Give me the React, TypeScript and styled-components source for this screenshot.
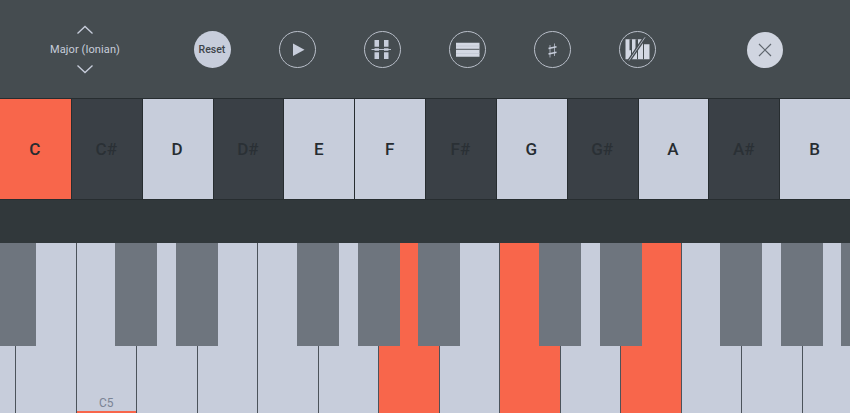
import * as React from 'react';
import styled, { createGlobalStyle } from 'styled-components';

const NOTES = ['C', 'C#', 'D', 'D#', 'E', 'F', 'F#', 'G', 'G#', 'A', 'A#', 'B'];
const ACTIVE_NOTE = 'C';

// first white key starts off screen
const WHITE_KEY_COUNT = 15;
const ACTIVE_WHITE = [7, 9, 11];
const LABEL_WHITE = 2;
const BLACK_KEYS = [-6, 115, 176, 297, 357.5, 418, 539, 599.5, 720, 780.5, 841];

const App: React.FC = () => {
  return (
    <StyledPage>
      <GlobalStyle />
      <StyledToolbar>
        <StyledScalePicker>
          <svg width='18' height='10' viewBox='0 0 18 10' fill='none'>
            <path d='M1.5 8.5L9 1.5L16.5 8.5' stroke='#c7cddb' strokeWidth='1.3' />
          </svg>
          <StyledScaleName>Major (Ionian)</StyledScaleName>
          <svg width='18' height='10' viewBox='0 0 18 10' fill='none'>
            <path d='M1.5 1.5L9 8.5L16.5 1.5' stroke='#c7cddb' strokeWidth='1.3' />
          </svg>
        </StyledScalePicker>
        <StyledButtons>
          <StyledFilledButton>Reset</StyledFilledButton>
          <StyledRoundButton>
            <svg width='37' height='37' viewBox='0 0 37 37'>
              <path d='M14 12.5L25.5 18.8L14 25Z' fill='#c7cddb' />
            </svg>
          </StyledRoundButton>
          <StyledRoundButton>
            <svg width='37' height='37' viewBox='0 0 37 37'>
              <path d='M10.5 9h4.5v19h-4.5zM20 9h4.5v19H20z' fill='#c7cddb' />
              <path d='M7 16.5h20M7 20.5h20' stroke='#454c50' strokeWidth='1.4' />
              <path d='M7.5 18.5h19.5' stroke='#c7cddb' strokeWidth='.9' />
            </svg>
          </StyledRoundButton>
          <StyledRoundButton>
            <svg width='37' height='37' viewBox='0 0 37 37'>
              <path d='M7 11.7h23.5v14H7z' fill='#d3d8e3' />
              <path d='M7 18.3h23.5' stroke='#454c50' strokeWidth='.9' />
              <path d='M7 15h23.5M7 22.5h23.5' stroke='#bcc2cf' strokeWidth='.6' />
            </svg>
          </StyledRoundButton>
          <StyledRoundButton>
            <svg width='37' height='37' viewBox='0 0 37 37' fill='none'>
              <path d='M16 14v12.5M20.5 12.5V25' stroke='#aab0bd' strokeWidth='.9' />
              <path d='M14.5 17.5l8-1.8M14.5 23l8-1.8' stroke='#c7cddb' strokeWidth='1.6' />
            </svg>
          </StyledRoundButton>
          <StyledRoundButton>
            <svg width='37' height='37' viewBox='0 0 37 37' fill='none'>
              <path d='M6.5 8.3h17.5v5h6.5v15h-24z' fill='#d3d8e3' />
              <path d='M12.5 8.3v20M18.5 8.3v20M24.5 8.3v20' stroke='#454c50' strokeWidth='1' />
              <path d='M10.5 8.3h2v11h-2zM16.5 8.3h2v11h-2z' fill='#454c50' />
              <path d='M26 6.3L10 29.6' stroke='#454c50' strokeWidth='3.4' />
              <path d='M26 6.3L10 29.6' stroke='#aab0bd' strokeWidth='1' />
            </svg>
          </StyledRoundButton>
        </StyledButtons>
        <StyledCloseButton>
          <svg width='14' height='14' viewBox='0 0 14 14' fill='none'>
            <path d='M1 1L13 13M13 1L1 13' stroke='#5f666e' strokeWidth='1.2' />
          </svg>
        </StyledCloseButton>
      </StyledToolbar>

      <StyledNotes>
        {NOTES.map((note) => (
          <StyledNote
            key={note}
            $sharp={note.includes('#')}
            $active={note === ACTIVE_NOTE}
          >
            {note}
          </StyledNote>
        ))}
      </StyledNotes>

      <StyledSpacer />

      <StyledKeyboard>
        <StyledWhiteKeys>
          {Array.from({ length: WHITE_KEY_COUNT }, (_, i) => (
            <StyledWhiteKey key={i} $active={ACTIVE_WHITE.includes(i)}>
              {i === LABEL_WHITE && <StyledKeyLabel>C5</StyledKeyLabel>}
            </StyledWhiteKey>
          ))}
        </StyledWhiteKeys>
        {BLACK_KEYS.map((left) => (
          <StyledBlackKey key={left} $left={left} />
        ))}
      </StyledKeyboard>
    </StyledPage>
  );
};

export default App;

const GlobalStyle = createGlobalStyle`
  html, body {
    margin: 0;
    padding: 0;
    background: #454c50;
  }
  * {
    box-sizing: border-box;
  }
`;
const StyledPage = styled.div`
  display: flex;
  flex-direction: column;
  width: 850px;
  height: 413px;
  overflow: hidden;
  font-family: Roboto, 'Liberation Sans', sans-serif;
`;
const StyledToolbar = styled.div`
  display: flex;
  flex-direction: row;
  align-items: center;
  height: 98px;
  flex: none;
  padding-top: 1px;
  background: #454c50;
`;
const StyledScalePicker = styled.div`
  display: flex;
  flex-direction: column;
  align-items: center;
  gap: 8px;
  width: 170px;
  flex: none;

  svg {
    display: block;
  }
`;
const StyledScaleName = styled.div`
  font-size: 11px;
  line-height: 13px;
  letter-spacing: 0.1px;
  color: #c7cddb;
`;
const StyledButtons = styled.div`
  display: flex;
  flex-direction: row;
  gap: 48px;
  margin-left: 23.5px;
`;
const StyledRoundButton = styled.div`
  width: 37px;
  height: 37px;
  border-radius: 50%;
  position: relative;
  flex: none;
  background: #454c50;

  svg {
    display: block;
    border-radius: 50%;
  }

  &::after {
    content: '';
    position: absolute;
    inset: 0;
    border-radius: 50%;
    border: 1px solid #b9bfca;
  }
`;
const StyledFilledButton = styled.div`
  display: flex;
  align-items: center;
  justify-content: center;
  width: 37px;
  height: 37px;
  border-radius: 50%;
  flex: none;
  background: #c7cddb;
  color: #3d4349;
  font-size: 10.5px;
  font-weight: 500;
`;
const StyledCloseButton = styled.div`
  display: flex;
  align-items: center;
  justify-content: center;
  width: 36px;
  height: 36px;
  border-radius: 50%;
  flex: none;
  margin-left: 91px;
  background: #d0d5e0;
`;
const StyledNotes = styled.div`
  display: grid;
  grid-template-columns: repeat(12, 1fr);
  height: 102px;
  flex: none;
  padding: 1px 0;
  background: #272d30;
`;
const StyledNote = styled.div<{ $sharp: boolean; $active: boolean }>`
  display: flex;
  align-items: center;
  justify-content: center;
  font-size: 17px;
  font-weight: 500;
  padding: 0 1px 1px 0;
  color: ${(p) => (p.$sharp ? '#2a3035' : '#262c31')};
  background: ${(p) => (p.$active ? '#f8664b' : p.$sharp ? '#3a4046' : '#c7cddb')};
  border-left: 1px solid #272d30;

  &:first-child {
    border-left: none;
  }
`;
const StyledSpacer = styled.div`
  height: 43px;
  flex: none;
  background: #31383b;
`;
const StyledKeyboard = styled.div`
  flex: 1;
  position: relative;
  overflow: hidden;
  background: #c7cddb;
`;
const StyledWhiteKeys = styled.div`
  display: flex;
  flex-direction: row;
  height: 100%;
  margin-left: -44.5px;
`;
const StyledWhiteKey = styled.div<{ $active: boolean }>`
  display: flex;
  flex-direction: column;
  justify-content: flex-end;
  width: 60.54px;
  flex: none;
  background: ${(p) => (p.$active ? '#f8664b' : '#c7cddb')};
  border-right: 1px solid #4c535b;
`;
const StyledKeyLabel = styled.div`
  height: 18px;
  line-height: 16px;
  text-align: center;
  font-size: 12px;
  color: #7b8494;
  border-bottom: 2px solid #f8664b;
`;
const StyledBlackKey = styled.div<{ $left: number }>`
  position: absolute;
  top: 0;
  left: ${(p) => p.$left}px;
  width: 42px;
  height: 102.5px;
  background: #6e757e;
`;
